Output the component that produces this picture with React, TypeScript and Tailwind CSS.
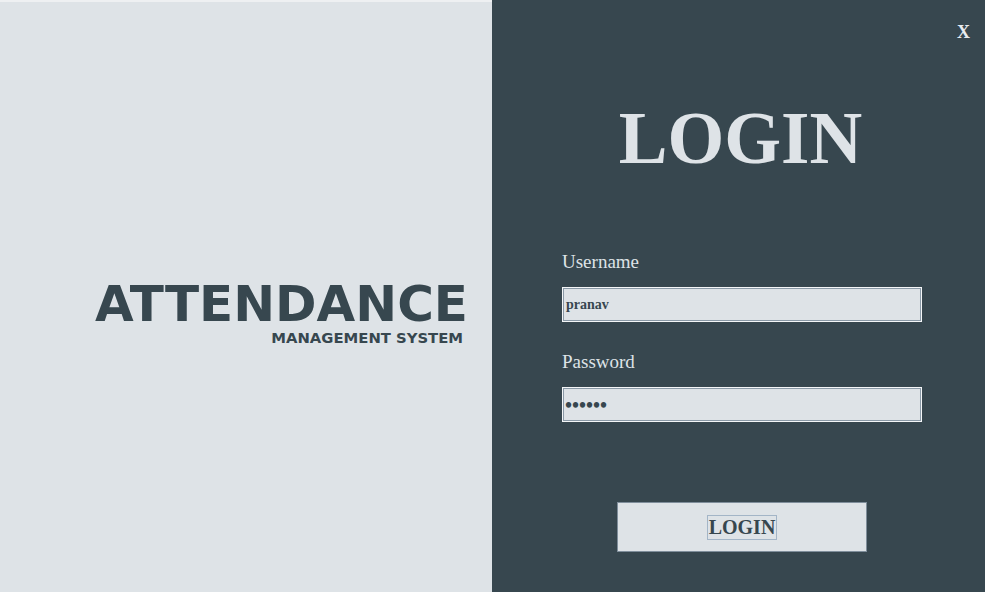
import React from "react";

export default function App() {
  const serif = { fontFamily: '"Liberation Serif", "Times New Roman", serif' };
  return (
    <div className="flex w-[985px] h-[592px] overflow-hidden">
      <div className="w-[492px] h-full bg-[#dee3e7] flex flex-col">
        <div className="h-[2px] bg-[#eef0f2]" />
        <div className="flex flex-col items-end pt-[277px] pr-[24px]" style={{ fontFamily: '"DejaVu Sans", Verdana, sans-serif' }}>
          <div className="text-[50px] leading-none font-bold text-[#37474f]">ATTENDANCE</div>
          <div className="mt-[2px] mr-[5px] text-[14.8px] leading-none font-bold text-[#37474f]">MANAGEMENT SYSTEM</div>
        </div>
      </div>
      <div className="w-[493px] h-full bg-[#37474f] flex flex-col pt-[23px]" style={serif}>
        <div className="flex justify-end pr-[15px] h-[18px]">
          <span className="text-[18px] leading-none font-bold text-[#e8ecef]">X</span>
        </div>
        <div className="mt-[61px] text-center text-[73px] leading-none font-bold text-[#dee3e7] pl-[4px]">LOGIN</div>
        <div className="mt-[77px] ml-[70px] text-[19px] leading-none text-[#dee3e7]">Username</div>
        <div className="mt-[16px] ml-[70px] w-[360px] h-[35px] bg-[#dee3e7] border border-[#f4f6f8] shadow-[inset_0_0_0_1px_#8a99a6] flex items-center pl-[3px]">
          <span className="text-[14px] font-bold text-[#37474f]">pranav</span>
        </div>
        <div className="mt-[30px] ml-[70px] text-[19px] leading-none text-[#dee3e7]">Password</div>
        <div className="mt-[16px] ml-[70px] w-[360px] h-[35px] bg-[#dee3e7] border border-[#f4f6f8] shadow-[inset_0_0_0_1px_#8a99a6] flex items-center pl-[2px]">
          <span className="text-[20px] leading-none font-bold text-[#37474f]">••••••</span>
        </div>
        <div className="mt-[80px] ml-[125px] w-[250px] h-[50px] bg-[#dee3e7] border border-[#7f8e9b] flex items-center justify-center">
          <span className="border border-[#a3b5c7] px-[1px] text-[20px] leading-[23px] font-bold text-[#37474f]">LOGIN</span>
        </div>
      </div>
    </div>
  );
}
